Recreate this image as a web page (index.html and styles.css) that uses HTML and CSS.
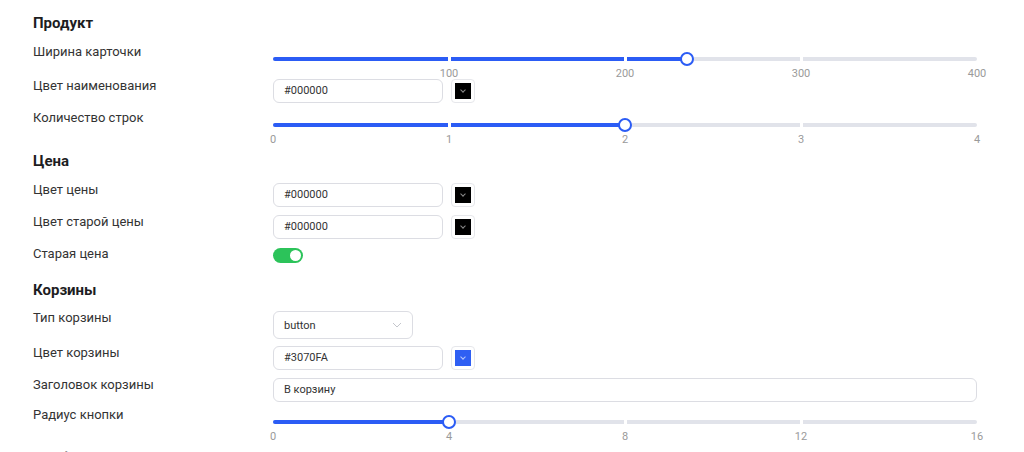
FILE: index.html
```html
<!DOCTYPE html>
<html lang="ru">
<head>
  <meta charset="UTF-8">
  <title>Настройки карточки</title>
  <link rel="stylesheet" href="styles.css">
</head>
<body>

<div class="settings">
  <h2 class="section-title">Продукт</h2>

  <div class="row row-34">
    <label>Ширина карточки</label>
    <div class="control control-slider">
      <div class="slider">
        <div class="rail"></div>
        <div class="track" style="width: 58.8%"></div>
        <span class="tick" style="left: 25%"></span>
        <span class="tick" style="left: 50%"></span>
        <span class="tick" style="left: 75%"></span>
        <span class="thumb" style="left: 58.8%"></span>
        <span class="mark" style="left: 25%">100</span>
        <span class="mark" style="left: 50%">200</span>
        <span class="mark" style="left: 75%">300</span>
        <span class="mark" style="left: 100%">400</span>
      </div>
    </div>
  </div>

  <div class="row">
    <label>Цвет наименования</label>
    <div class="control">
      <div class="color-field">
        <div class="input">#000000</div>
        <div class="swatch"><span class="swatch-fill"></span></div>
      </div>
    </div>
  </div>

  <div class="row row-41">
    <label>Количество строк</label>
    <div class="control control-slider">
      <div class="slider">
        <div class="rail"></div>
        <div class="track" style="width: 50%"></div>
        <span class="tick" style="left: 25%"></span>
        <span class="tick" style="left: 50%"></span>
        <span class="tick" style="left: 75%"></span>
        <span class="thumb" style="left: 50%"></span>
        <span class="mark" style="left: 0%">0</span>
        <span class="mark" style="left: 25%">1</span>
        <span class="mark" style="left: 50%">2</span>
        <span class="mark" style="left: 75%">3</span>
        <span class="mark" style="left: 100%">4</span>
      </div>
    </div>
  </div>

  <h2 class="section-title">Цена</h2>

  <div class="row">
    <label>Цвет цены</label>
    <div class="control">
      <div class="color-field">
        <div class="input">#000000</div>
        <div class="swatch"><span class="swatch-fill"></span></div>
      </div>
    </div>
  </div>

  <div class="row">
    <label>Цвет старой цены</label>
    <div class="control">
      <div class="color-field">
        <div class="input">#000000</div>
        <div class="swatch"><span class="swatch-fill"></span></div>
      </div>
    </div>
  </div>

  <div class="row row-34">
    <label>Старая цена</label>
    <div class="control control-toggle">
      <span class="toggle on"><span class="knob"></span></span>
    </div>
  </div>

  <h2 class="section-title section-title-short">Корзины</h2>

  <div class="row row-35">
    <label>Тип корзины</label>
    <div class="control">
      <div class="select">
        <span>button</span>
        <svg class="chevron" width="10" height="6" viewBox="0 0 10 6"><path d="M1 1l4 4 4-4" fill="none" stroke="#c4c6cc" stroke-width="1"/></svg>
      </div>
    </div>
  </div>

  <div class="row">
    <label>Цвет корзины</label>
    <div class="control">
      <div class="color-field">
        <div class="input">#3070FA</div>
        <div class="swatch"><span class="swatch-fill blue"></span></div>
      </div>
    </div>
  </div>

  <div class="row row-30">
    <label>Заголовок корзины</label>
    <div class="control">
      <div class="input input-wide">В корзину</div>
    </div>
  </div>

  <div class="row row-41">
    <label>Радиус кнопки</label>
    <div class="control control-slider">
      <div class="slider">
        <div class="rail"></div>
        <div class="track" style="width: 25%"></div>
        <span class="tick" style="left: 25%"></span>
        <span class="tick" style="left: 50%"></span>
        <span class="tick" style="left: 75%"></span>
        <span class="thumb" style="left: 25%"></span>
        <span class="mark" style="left: 0%">0</span>
        <span class="mark" style="left: 25%">4</span>
        <span class="mark" style="left: 50%">8</span>
        <span class="mark" style="left: 75%">12</span>
        <span class="mark" style="left: 100%">16</span>
      </div>
    </div>
  </div>

  <h2 class="section-title">Изображение</h2>
</div>

</body>
</html>
```

FILE: styles.css
```css
* {
  margin: 0;
  padding: 0;
  box-sizing: border-box;
}

html, body {
  height: 100%;
  overflow: hidden;
  background: #ffffff;
  font-family: Roboto, "Liberation Sans", sans-serif;
  color: #2b2b2b;
}

.settings {
  padding: 11px 0 0 33px;
}

.section-title {
  font-size: 15px;
  font-weight: 700;
  line-height: 24px;
  height: 31px;
  color: #1d1d1f;
}

.section-title-short {
  height: 30px;
}

/* form rows */
.row {
  display: grid;
  grid-template-columns: 240px 704px;
  height: 32px;
}

.row-30 { height: 30px; }
.row-34 { height: 34px; }
.row-35 { height: 35px; }
.row-41 { height: 41px; }

.row label {
  font-size: 13px;
  line-height: 20px;
  color: #333333;
}

.control {
  padding-top: 3px;
}

.control-slider {
  padding-top: 15px;
}

.control-toggle {
  padding-top: 4px;
}

/* inputs */
.color-field {
  display: flex;
  gap: 8px;
  align-items: center;
}

.input {
  width: 170px;
  height: 24px;
  border: 1px solid #dcdde3;
  border-radius: 6px;
  padding: 0 10px;
  font-size: 11px;
  line-height: 22px;
  color: #333333;
}

.input-wide {
  width: 704px;
}

.swatch {
  width: 24px;
  height: 24px;
  border: 1px solid #e6e7eb;
  border-radius: 4px;
  padding: 3px;
}

.swatch-fill {
  display: flex;
  width: 100%;
  height: 100%;
  background: #000000;
  align-items: center;
  justify-content: center;
}

.swatch-fill::after {
  content: "";
  width: 3px;
  height: 3px;
  border-right: 1px solid #8a8a8a;
  border-bottom: 1px solid #8a8a8a;
  transform: rotate(45deg);
  margin-top: -2px;
}

.swatch-fill.blue {
  background: #2f5ff3;
}

.swatch-fill.blue::after {
  border-color: #b9c8fb;
}

.select {
  width: 140px;
  height: 28px;
  border: 1px solid #dcdde3;
  border-radius: 6px;
  padding: 0 10px;
  display: flex;
  align-items: center;
  justify-content: space-between;
  font-size: 11px;
  color: #333333;
}

/* toggle */
.toggle {
  display: block;
  width: 30px;
  height: 15px;
  border-radius: 8px;
  background: #2cc35a;
  padding: 2px;
}

.toggle.on .knob {
  display: block;
  width: 11px;
  height: 11px;
  border-radius: 50%;
  background: #ffffff;
  margin-left: auto;
}

/* slider */
.slider {
  position: relative;
  width: 704px;
  height: 4px;
}

.rail, .track {
  position: absolute;
  top: 0;
  left: 0;
  height: 4px;
  border-radius: 2px;
}

.rail {
  width: 100%;
  background: #e1e3ea;
}

.track {
  background: #2b5cf5;
}

.tick {
  position: absolute;
  top: 0;
  width: 3px;
  height: 4px;
  margin-left: -1px;
  background: #ffffff;
}

.thumb {
  position: absolute;
  top: -5px;
  width: 14px;
  height: 14px;
  margin-left: -7px;
  border-radius: 50%;
  border: 2px solid #2b5cf5;
  background: #ffffff;
}

.mark {
  position: absolute;
  top: 10px;
  transform: translateX(-50%);
  font-size: 11px;
  line-height: 14px;
  color: #9a9a9a;
}
```
